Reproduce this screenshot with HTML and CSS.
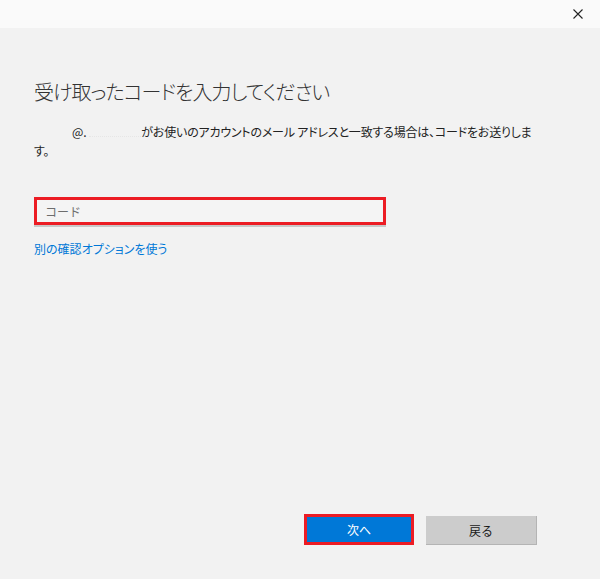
FILE: index.html
```html
<!DOCTYPE html>
<html lang="ja">
<head>
<meta charset="utf-8">
<title>コードの入力</title>
<link rel="stylesheet" href="styles.css">
</head>
<body>
<div class="window">
  <div class="titlebar">
    <button class="close" aria-label="閉じる">
      <svg width="10" height="10" viewBox="0 0 10 10"><path d="M0.5 0.5L9.5 9.5M9.5 0.5L0.5 9.5" stroke="#222" stroke-width="1.1" fill="none"/></svg>
    </button>
  </div>
  <main class="content">
    <h1 class="title">受け取ったコードを入力してください</h1>
    <p class="desc"><span class="email"><span class="email-user"></span>@.<span class="email-domain"></span></span>がお使いのアカウントのメール アドレスと一致する場合は、コードをお送りしま<br>す。</p>
    <div class="field">
      <input class="code" type="text" placeholder="コード">
    </div>
    <a class="alt-link" href="#">別の確認オプションを使う</a>
    <div class="spacer"></div>
    <div class="actions">
      <button class="btn btn-primary">次へ</button>
      <button class="btn btn-secondary">戻る</button>
    </div>
  </main>
</div>
</body>
</html>
```
FILE: styles.css
```css
* { box-sizing: border-box; }
html, body {
  margin: 0;
  padding: 0;
  height: 100%;
}
body {
  background: #f2f2f2;
  font-family: "Noto Sans CJK JP", "Noto Sans", sans-serif;
  font-feature-settings: "palt";
  color: #222;
}
.window {
  display: flex;
  flex-direction: column;
  height: 579px;
}
.titlebar {
  height: 28px;
  background: #fafafa;
  display: flex;
  justify-content: flex-end;
  align-items: center;
  padding-right: 17px;
}
.close {
  border: 0;
  background: transparent;
  padding: 0;
  width: 10px;
  height: 10px;
  display: flex;
}
.content {
  flex: 1;
  display: flex;
  flex-direction: column;
  padding: 0 34px 34px 34px;
}
.title {
  margin: 51px 0 0 0;
  font-size: 20px;
  font-weight: 300;
  line-height: 26px;
  color: #333;
  letter-spacing: -1px;
}
.desc {
  margin: 17px 0 0 0;
  font-size: 12px;
  line-height: 19px;
  color: #222;
  letter-spacing: -0.2px;
}
.email {
  display: inline-block;
}
.email-user {
  display: inline-block;
  width: 38px;
}
.email-domain {
  display: inline-block;
  width: 52px;
  margin-left: 3px;
  border-bottom: 1px dotted #e6e6e6;
  height: 10px;
}
.field {
  margin-top: 37px;
  width: 352px;
  border-bottom: 2px solid #c8c8c8;
}
.code {
  display: block;
  width: 100%;
  height: 28px;
  border: 3px solid #ec1c24;
  background: #f4f4f4;
  font-family: inherit;
  font-size: 12px;
  padding: 0 8px;
  color: #333;
  outline: none;
}
.code::placeholder {
  color: #6d6d6d;
}
.alt-link {
  margin-top: 13px;
  align-self: flex-start;
  font-size: 12px;
  line-height: 18px;
  color: #0078d7;
  text-decoration: none;
}
.spacer { flex: 1; }
.actions {
  display: flex;
  justify-content: flex-end;
  align-items: flex-end;
  gap: 12px;
  padding-right: 29px;
}
.btn {
  font-family: inherit;
  font-size: 12px;
  cursor: pointer;
}
.btn-primary {
  width: 110px;
  height: 31px;
  background: #0078d7;
  color: #fff;
  border: 3px solid #ec1c24;
}
.btn-secondary {
  width: 111px;
  height: 29px;
  background: #cccccc;
  color: #1a1a1a;
  border: 0;
  border-right: 1px solid #b4b4b4;
  border-bottom: 1px solid #b4b4b4;
}
```
